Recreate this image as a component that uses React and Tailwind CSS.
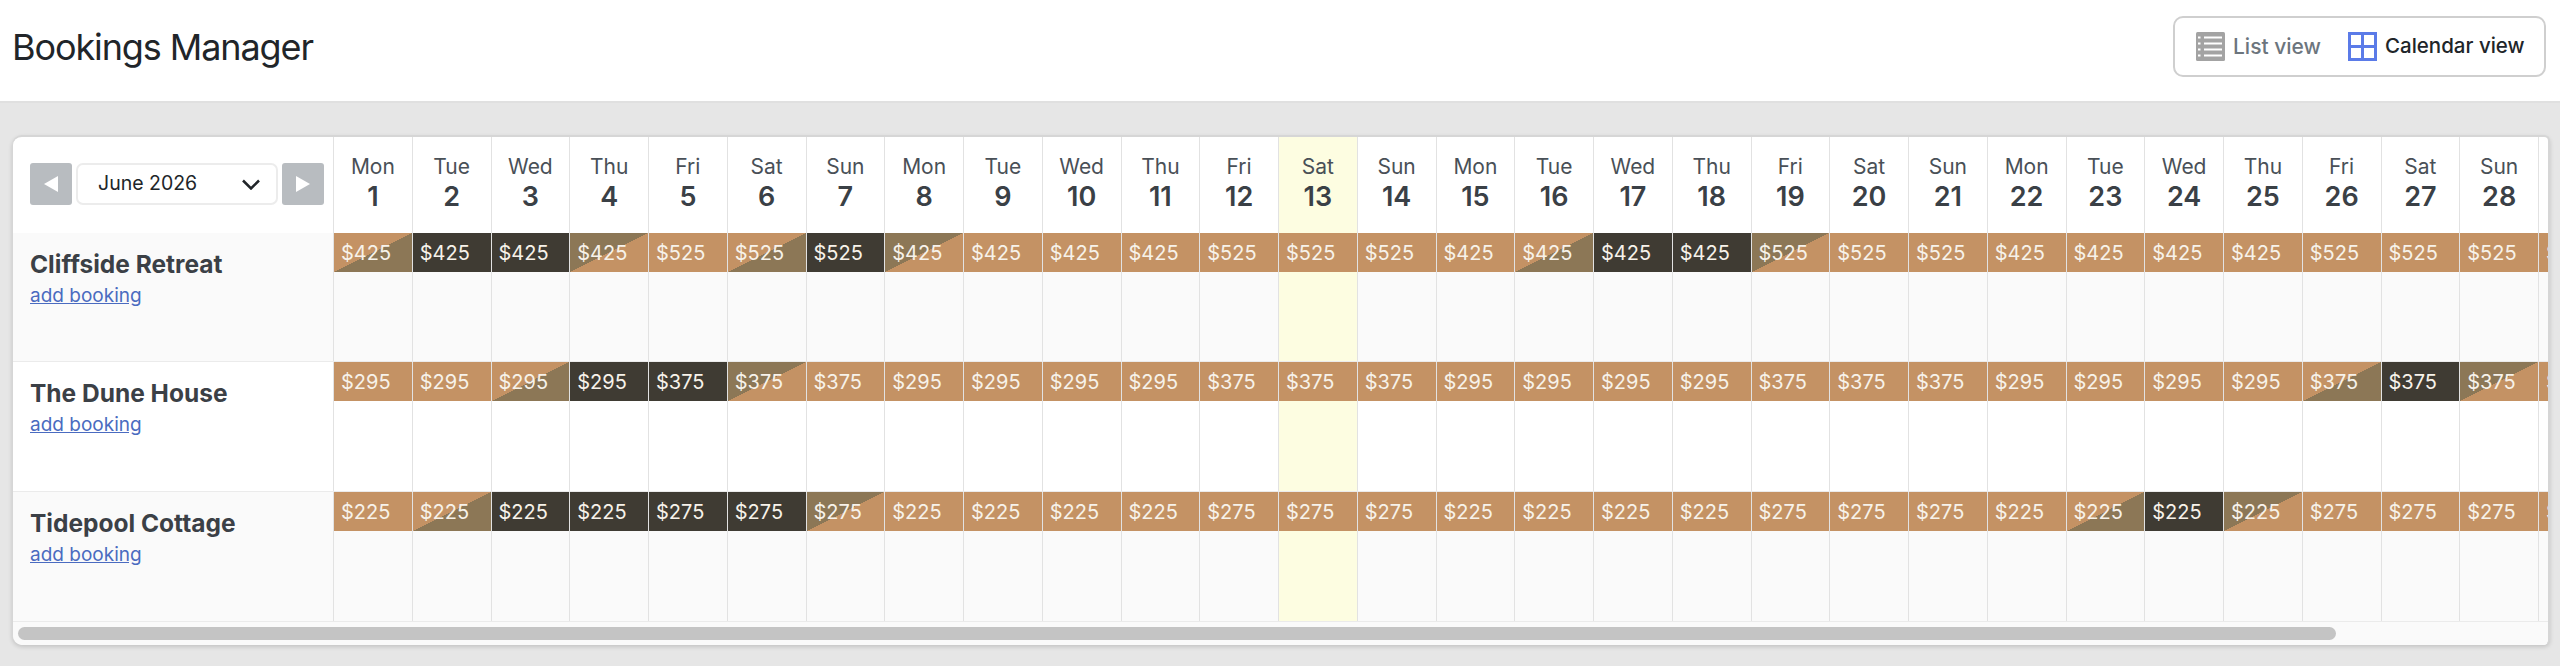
import React from "react";

const weekdays = ["Mon", "Tue", "Wed", "Thu", "Fri", "Sat", "Sun"];
const days = Array.from({ length: 29 }, (_, i) => ({ num: i + 1, name: weekdays[i % 7] }));

const properties = [
  { name: "Cliffside Retreat", low: 425, high: 525, row: "h-[129px] bg-[#fafafa]", arrive: [1, 6, 16], booked: [2, 3, 7, 17, 18], leave: [4, 8, 19] },
  { name: "The Dune House", low: 295, high: 375, row: "h-[130px] bg-white", arrive: [3, 26], booked: [4, 5, 27], leave: [6, 28] },
  { name: "Tidepool Cottage", low: 225, high: 275, row: "h-[130px] bg-[#fafafa]", arrive: [2, 23], booked: [3, 4, 5, 6, 24], leave: [7, 25] },
];

function ListIcon() {
  return (
    <svg width="29" height="29" viewBox="0 0 29 29" className="shrink-0">
      <rect width="29" height="29" rx="1.5" fill="#a3a3a3" />
      <path d="M8 5.500h18M8 11.500h18M8 17.500h18M8 23.500h18" stroke="#fff" strokeWidth="2" />
      <path d="M2 5.500h2.500M2 11.500h2.500M2 17.500h2.500M2 23.500h2.500" stroke="#fff" strokeWidth="2" />
    </svg>
  );
}

function GridIcon() {
  return (
    <svg width="29" height="29" viewBox="0 0 29 29" className="shrink-0">
      <path d="M1.500 1.500h26v26h-26zM14.500 1.500v26M1.500 14.500h26" fill="none" stroke="#5b7be8" strokeWidth="3" />
    </svg>
  );
}

function RateCell({ day, property }) {
  const weekend = (day.num - 1) % 7 >= 4;
  const price = weekend ? property.high : property.low;
  let fill = "bg-[#c49264]";
  if (property.booked.includes(day.num)) fill = "bg-[#3f3b33]";
  if (property.arrive.includes(day.num)) fill = "bg-[linear-gradient(to_bottom_right,#c49264_50%,#8c7756_50%)]";
  if (property.leave.includes(day.num)) fill = "bg-[linear-gradient(to_bottom_right,#8c7756_50%,#c49264_50%)]";
  return (
    <div className={`h-[39px] pl-[7px] flex items-center text-[20px] text-[#f7f2ea] ${fill}`}>${price}</div>
  );
}

export default function App() {
  return (
    <div className="min-h-[666px] bg-[#e6e6e6] font-['Inter',sans-serif]">
      <header className="h-[103px] bg-white border-b-2 border-[#e0e0e0] flex items-center justify-between pl-[12px] pr-[14px]">
        <h1 className="text-[36px] text-[#212529] tracking-[-1.1px] pb-[8px]">Bookings Manager</h1>
        <div className="h-[61px] w-[373px] mb-[8px] rounded-[10px] border-2 border-[#cfcfcf] flex items-center pl-[21px] text-[21px]">
          <div className="flex items-center gap-[8px] text-[#6c757d] font-medium">
            <ListIcon />
            List view
          </div>
          <div className="flex items-center gap-[8px] ml-[27px] text-[20.5px] text-[#212529] font-medium">
            <GridIcon />
            Calendar view
          </div>
        </div>
      </header>

      <main className="pt-[32px] pl-[12px] pr-[10px]">
        <div className="h-[510px] rounded-l-[10px] rounded-r-[6px] border-t-2 border-r-2 border-l border-[#d6d6d6] bg-white overflow-hidden shadow-[0_2px_4px_rgba(0,0,0,0.15)]">
          <div className="flex h-[96px]">
            <div className="w-[320px] shrink-0 flex items-center gap-[4px] pl-[17px] pb-[2px]">
              <button className="w-[42px] h-[42px] rounded-[3px] bg-[#b8bcc0] flex items-center justify-center">
                <span className="border-y-[8px] border-y-transparent border-r-[14px] border-r-white" />
              </button>
              <div className="w-[202px] h-[42px] rounded-[7px] border-2 border-[#ececec] bg-white flex items-center justify-between pl-[20px] pr-[16px] text-[19.5px] text-[#212529]">
                June 2026
                <svg width="18" height="11" viewBox="0 0 18 11" fill="none" stroke="#212529" strokeWidth="2.500">
                  <path d="M1 1.500l8 8 8-8" />
                </svg>
              </div>
              <button className="w-[42px] h-[42px] rounded-[3px] bg-[#b8bcc0] flex items-center justify-center">
                <span className="border-y-[8px] border-y-transparent border-l-[14px] border-l-white" />
              </button>
            </div>
            {days.map((day) => (
              <div
                key={day.num}
                className={`w-[78.75px] shrink-0 border-l border-[#e2e2e2] pt-[16px] text-center text-[#3a4046] ${day.num === 13 ? "bg-[#fdfde1]" : ""}`}
              >
                <div className="text-[21px] leading-[28px] text-[#495057]">{day.name}</div>
                <div className="text-[27px] leading-[32px] font-semibold">{day.num}</div>
              </div>
            ))}
          </div>

          {properties.map((property) => (
            <div key={property.name} className={`flex border-b border-[#ebebeb] ${property.row}`}>
              <div className="w-[320px] shrink-0 pl-[17px] pt-[15px]">
                <div className="text-[24.5px] leading-[32px] font-bold text-[#3b4046]">{property.name}</div>
                <a href="#" className="block mt-[2px] text-[19px] leading-[28px] text-[#4a6bc0] underline">add booking</a>
              </div>
              {days.map((day) => (
                <div
                  key={day.num}
                  className={`w-[78.75px] shrink-0 border-l border-[#e2e2e2] ${day.num === 13 ? "bg-[#fdfde1]" : ""}`}
                >
                  <RateCell day={day} property={property} />
                </div>
              ))}
            </div>
          ))}

          <div className="h-[23px] bg-[#fafafa] pl-[5px] pt-[5px]">
            <div className="h-[13px] w-[2318px] rounded-full bg-[#c4c4c4]" />
          </div>
        </div>
      </main>
    </div>
  );
}
